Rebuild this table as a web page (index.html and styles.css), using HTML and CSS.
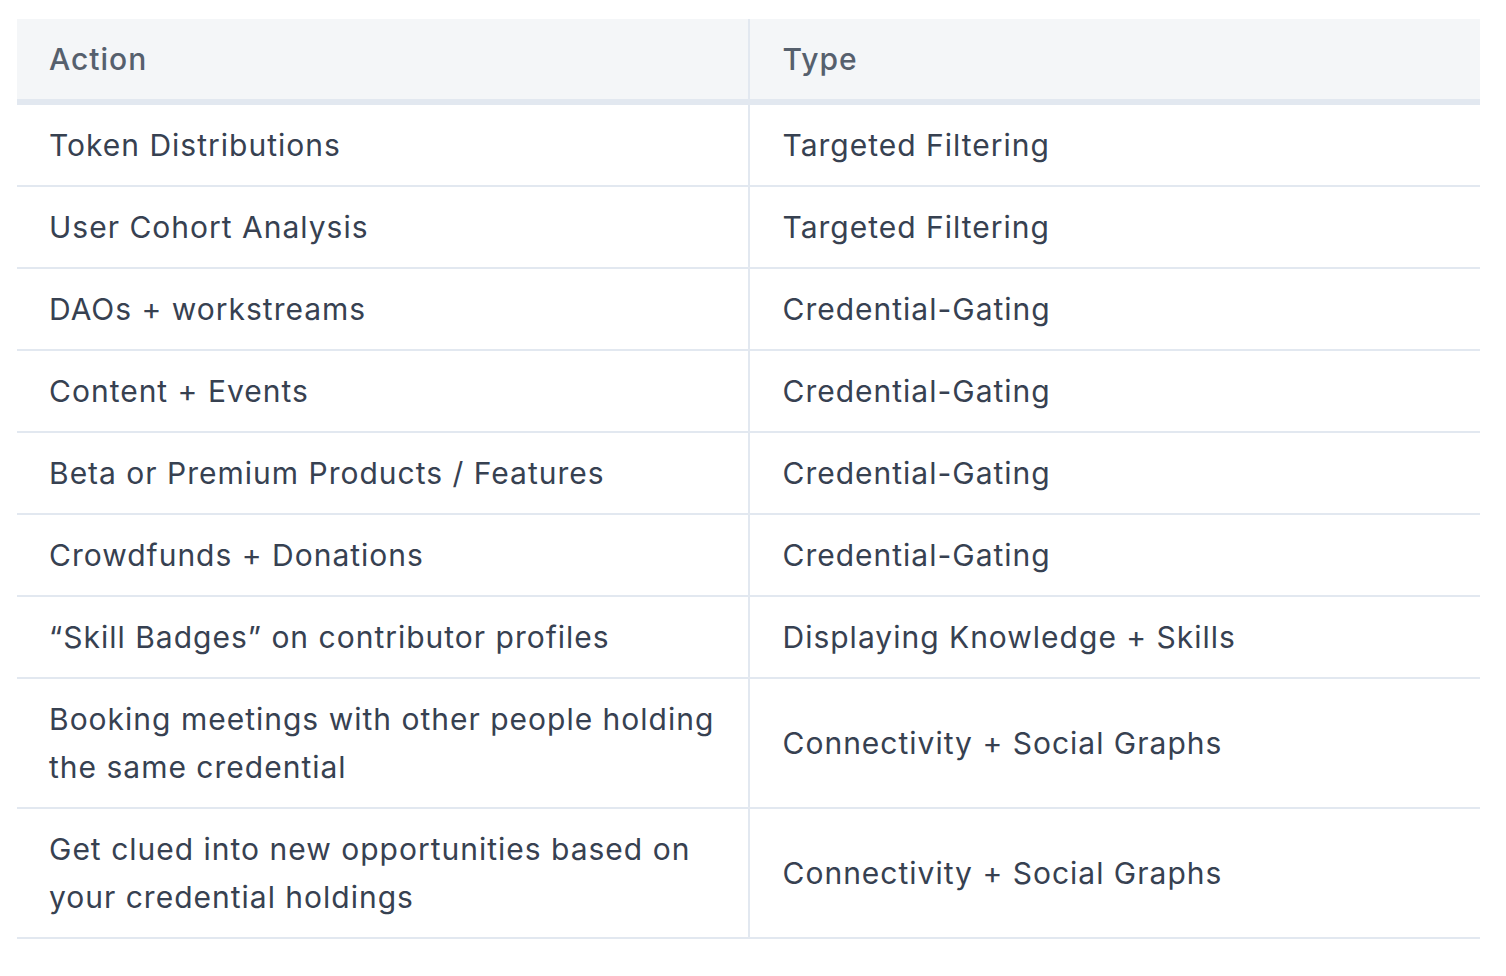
FILE: index.html
```html
<!DOCTYPE html>
<html lang="en">
<head>
<meta charset="utf-8">
<title>Table</title>
<link rel="stylesheet" href="styles.css">
</head>
<body>
<div class="wrap">
<table class="tbl">
  <colgroup><col class="c1"><col class="c2"></colgroup>
  <thead>
    <tr><th>Action</th><th>Type</th></tr>
  </thead>
  <tbody>
    <tr><td>Token Distributions</td><td>Targeted Filtering</td></tr>
    <tr><td>User Cohort Analysis</td><td>Targeted Filtering</td></tr>
    <tr><td>DAOs + workstreams</td><td>Credential-Gating</td></tr>
    <tr><td>Content + Events</td><td>Credential-Gating</td></tr>
    <tr><td>Beta or Premium Products / Features</td><td>Credential-Gating</td></tr>
    <tr><td>Crowdfunds + Donations</td><td>Credential-Gating</td></tr>
    <tr><td>“Skill Badges” on contributor profiles</td><td>Displaying Knowledge + Skills</td></tr>
    <tr><td>Booking meetings with other people holding the same credential</td><td>Connectivity + Social Graphs</td></tr>
    <tr><td>Get clued into new opportunities based on your credential holdings</td><td>Connectivity + Social Graphs</td></tr>
  </tbody>
</table>
</div>
</body>
</html>
```

FILE: styles.css
```css
html, body {
  margin: 0;
  padding: 0;
  background: #ffffff;
}
.wrap {
  padding: 19px 26px 0 17px;
}
.tbl {
  width: 1463px;
  border-collapse: collapse;
  table-layout: fixed;
  font-family: Inter, "Noto Sans", sans-serif;
  font-size: 30px;
  line-height: 48px;
  letter-spacing: 1px;
  color: #374151;
}
.c1, .c2 {
  width: 50%;
}
.tbl th, .tbl td {
  text-align: left;
  vertical-align: middle;
  padding: 16px 30px 16px 32px;
}
.tbl th:last-child, .tbl td:last-child {
  padding-left: 33px;
}
.tbl th {
  background: #f4f6f8;
  color: #56606d;
  font-weight: 500;
  border-bottom: 6px solid #e2e8f0;
}
.tbl td {
  border-bottom: 2px solid #e2e8f0;
}
.tbl th:first-child, .tbl td:first-child {
  border-right: 2px solid #e2e8f0;
}
```
